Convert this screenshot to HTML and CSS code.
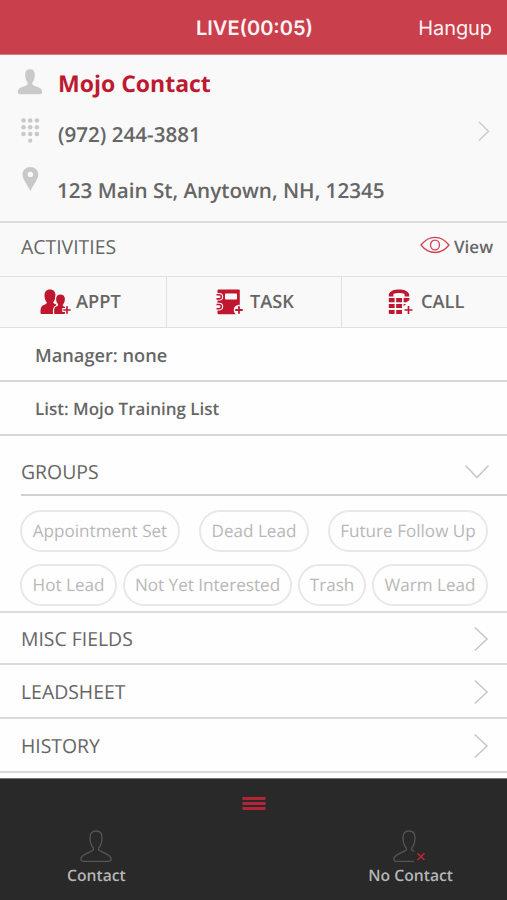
FILE: index.html
```html
<!DOCTYPE html>
<html lang="en">
<head>
<meta charset="utf-8">
<title>Mojo Contact</title>
<link rel="stylesheet" href="styles.css">
</head>
<body>
<header class="topbar"><span></span><h1 class="call-status">LIVE(00:05)</h1><a class="hangup">Hangup</a></header>

<section class="contact">
  <div class="contact-row name-row">
    <svg class="contact-icon" width="26" height="26" viewBox="0 0 26 26"><path fill="#c9c9c9" d="M13 0.3c3.200 0 4.800 1.900 4.800 5.200 0 2.800-.5 5.500-2.100 7.500-.8 1.200-.5 3 1 3.500l5.200 1.900c2.200.9 3.300 2.400 3.300 4.600 0 1.400-.8 2.200-2.200 2.200H3c-1.400 0-2.200-.8-2.200-2.200 0-2.200 1.100-3.700 3.300-4.600l5.200-1.900c1.500-.5 1.800-2.300 1-3.500C8.700 11 8.200 8.300 8.200 5.500 8.200 2.200 9.800.3 13 .3z"/></svg>
    <span class="contact-name">Mojo Contact</span>
  </div>
  <div class="contact-row phone-row">
    <svg class="contact-icon" width="26" height="26" viewBox="0 0 26 26"><g fill="#c9c9c9"><circle cx="6.500" cy="2.500" r="2.300"/><circle cx="13.200" cy="2.500" r="2.300"/><circle cx="19.900" cy="2.500" r="2.300"/><circle cx="6.500" cy="9.300" r="2.300"/><circle cx="13.200" cy="9.300" r="2.300"/><circle cx="19.900" cy="9.300" r="2.300"/><circle cx="6.500" cy="16" r="2.300"/><circle cx="13.200" cy="16" r="2.300"/><circle cx="19.900" cy="16" r="2.300"/><circle cx="13.200" cy="22.700" r="2.100"/></g></svg>
    <span class="phone">(972) 244-3881</span>
    <svg class="row-arrow" width="14" height="22" viewBox="0 0 14 22"><path d="M2 2l9.500 9.200L2 20.500" fill="none" stroke="#ccc" stroke-width="1.500"/></svg>
  </div>
  <div class="contact-row address-row">
    <svg class="contact-icon pin" width="26" height="26" viewBox="0 0 26 26"><path fill="#c9c9c9" fill-rule="evenodd" d="M13.400 1c4.600 0 7.900 3.200 7.900 7.600 0 4.600-4.300 9.200-7.900 16.400C9.800 17.800 5.500 13.200 5.500 8.600 5.500 4.200 8.800 1 13.400 1zm0 4.700a2.700 2.700 0 1 0 0 5.400 2.700 2.700 0 0 0 0-5.400z"/></svg>
    <span class="address">123 Main St, Anytown, NH, 12345</span>
  </div>
</section>

<section class="activities">
  <h2 class="heading activities-title">ACTIVITIES</h2>
  <a class="view"><svg width="30" height="18" viewBox="0 0 30 18"><g fill="none" stroke="#cf4352" stroke-width="1.300"><path d="M1 9C9-1.300 21-1.300 29 9 21 19 9 19 1 9z"/><ellipse cx="15" cy="9" rx="4.500" ry="4.900"/></g></svg><span class="view-label">View</span></a>
</section>

<nav class="actions">
  <a class="action appt">
    <svg width="32" height="27" viewBox="0 0 32 27"><g fill="#c01730"><path d="M10 .5c3.600 0 5.500 2.300 5.500 6 0 3.300-1.200 5.700-2.400 7 .3.900 1.800 1.500 3.300 2L12.800 25H.8c-.8-5 .2-8.300 3-9.100 1.600-.5 3-1.400 3.100-2.500C5.500 12 4.500 9.700 4.500 6.500c0-3.700 1.900-6 5.500-6z"/><path stroke="#f9f9f9" stroke-width="1.200" d="M20.500 5c3.200 0 5 2 5 5.300 0 2.600-.9 4.700-2.100 5.900.4 1 2.600 1 3.600 2.500l-1.800 7H13.700c-.7-4.900.2-8 2.400-8.700 1.300-.4 1.500-.7 1.500-1.200-1.200-1.100-2.100-3-2.100-5.500 0-3.300 1.800-5.300 5-5.300z"/></g><path d="M27 16v10M22.300 21h9.500" stroke="#f9f9f9" stroke-width="4"/><path d="M27 17.300v7.400M23.300 21h7.400" stroke="#c01730" stroke-width="1.700"/></svg>
    <span>APPT</span>
  </a>
  <a class="action task">
    <svg width="27" height="27" viewBox="0 0 27 27"><path fill="#c01730" d="M1.500 1.500Q1.500.5 2.500.5h20.300q1 0 1 1v23.700H2.500q-1 0-1-1z"/><rect x="9" y="4.500" width="12" height="6" rx=".7" fill="#f9f9f9"/><g fill="#f9f9f9"><path d="M0 4h3.500q3.700 0 3.700 3.800t-3.700 3.800H0zM0 13.800h3.500q3.700 0 3.700 3.800t-3.700 3.800H0z"/><circle cx="23" cy="21" r="5.300"/></g><g fill="none" stroke="#c01730" stroke-width="1.600"><path d="M.5 5.700H3q2.300 0 2.300 2.100T3 9.900H.5M.5 15.500H3q2.300 0 2.300 2.100T3 19.700H.5"/></g><path d="M23 17.300v7.500M19.200 21h7.500" stroke="#c01730" stroke-width="1.800"/></svg>
    <span>TASK</span>
  </a>
  <a class="action call">
    <svg width="25" height="27" viewBox="0 0 25 27"><g fill="#c01730"><path d="M.8 7.600V5.200C2.500 1.700 6 .5 11 .5s8.500 1.200 10.200 4.700v2.400h-4.600V5c-3-1.200-8.200-1.200-11.200 0v2.600z"/><path d="M.8 9h5.800v4.200H.8zM8.200 9H14v4.200H8.200zM15.600 9h5.800v2l-3 2.200h-2.800zM.8 15h5.800v4H.8zM8.200 15H14v4H8.200zM15.600 15H18l-2.400 2.300zM.8 20.900h5.800V25H1.800q-1 0-1-1zM8.200 20.900H14V25H8.200z"/></g><path d="M20.500 17v8M16.500 21h8" stroke="#c01730" stroke-width="1.700"/></svg>
    <span>CALL</span>
  </a>
</nav>

<div class="detail manager"><span>Manager: none</span></div>
<div class="detail list"><span>List: Mojo Training List</span></div>

<section class="groups">
  <div class="groups-head">
    <h2 class="heading groups-title">GROUPS</h2>
    <svg width="26" height="16" viewBox="0 0 26 16"><path d="M1.500 1.500L13 13.500 24.500 1.500" fill="none" stroke="#c8c8c8" stroke-width="1.600"/></svg>
  </div>
  <div class="chips">
    <div class="chip-row"><span class="chip appointment">Appointment Set</span><span class="chip dead">Dead Lead</span><span class="chip future">Future Follow Up</span></div>
    <div class="chip-row"><span class="chip hot">Hot Lead</span><span class="chip interested">Not Yet Interested</span><span class="chip trash">Trash</span><span class="chip warm">Warm Lead</span></div>
  </div>
</section>

<div class="menu-row misc"><h2 class="heading">MISC FIELDS</h2><svg width="16" height="26" viewBox="0 0 16 26"><path d="M1.800 1.500L14 13 1.800 24.500" fill="none" stroke="#c8c8c8" stroke-width="1.600"/></svg></div>
<div class="menu-row"><h2 class="heading">LEADSHEET</h2><svg width="16" height="26" viewBox="0 0 16 26"><path d="M1.800 1.500L14 13 1.800 24.500" fill="none" stroke="#c8c8c8" stroke-width="1.600"/></svg></div>
<div class="menu-row"><h2 class="heading">HISTORY</h2><svg width="16" height="26" viewBox="0 0 16 26"><path d="M1.800 1.500L14 13 1.800 24.500" fill="none" stroke="#c8c8c8" stroke-width="1.600"/></svg></div>

<footer class="bottom">
  <div class="burger"><i></i><i></i><i></i></div>
  <div class="results">
    <a class="result reached">
      <svg width="32" height="32" viewBox="0 0 32 32"><path d="M16 1c4 0 6 2.500 6 6.500 0 5-1.500 8.500-3.300 10.500-.6 1.300.1 2.300 1.400 2.900l7 3.500c2.600 1.300 4 2.900 4 4.600 0 1.600-.9 2.300-2.500 2.300H3.400C1.800 31.300.9 30.600.9 29c0-1.700 1.400-3.300 4-4.600l7-3.500c1.300-.6 2-1.600 1.400-2.900C11.500 16 10 12.500 10 7.500 10 3.500 12 1 16 1z" fill="none" stroke="#555" stroke-width="1.300"/></svg>
      <span>Contact</span>
    </a>
    <a class="result missed">
      <svg width="36" height="32" viewBox="0 0 36 32"><path d="M21 31.300H3.400C1.800 31.300.9 30.600.9 29c0-1.700 1.400-3.300 4-4.600l7-3.500c1.300-.6 2-1.600 1.400-2.900C11.500 16 10 12.500 10 7.500 10 3.500 12 1 16 1s6 2.500 6 6.500c0 5-1.500 8.500-3.300 10.500-.6 1.300.1 2.300 2.600 3.300" fill="none" stroke="#555" stroke-width="1.300"/><path d="M24.500 23.300l7 6.700M31.500 23.300l-7 6.700" stroke="#c02638" stroke-width="1.500"/></svg>
      <span>No Contact</span>
    </a>
  </div>
</footer>
</body>
</html>
```
FILE: styles.css
```css
* { box-sizing: border-box; }
body {
  margin: 0;
  width: 507px;
  height: 900px;
  overflow: hidden;
  background: #fefefe;
  color: #666;
  font-family: "Open Sans", sans-serif;
  font-weight: 600;
  text-rendering: geometricPrecision;
}
svg { display: block; flex: none; overflow: visible; }
span, a { white-space: nowrap; }
h1, h2 { margin: 0; }

.topbar {
  display: grid;
  grid-template-columns: 1fr auto 1fr;
  align-items: center;
  height: 55px;
  padding: 2px 15px 0 17px;
  background: #c93f4c;
  border-bottom: 1px solid #d77a83;
  color: #fdf3f4;
  font-family: Inter, sans-serif;
}
.call-status { font-size: 20px; line-height: 24px; font-weight: 600; }
.hangup { justify-self: end; font-size: 20px; font-weight: 400; letter-spacing: -0.1px; }

.contact { height: 168px; background: #f9f9f9; border-bottom: 2px solid #dcdcdc; }
.contact-row { display: flex; align-items: center; padding: 0 16px 0 17px; }
.contact-icon { margin-right: 15px; }
.name-row { height: 56px; }
.name-row .contact-icon { margin-top: -3px; }
.contact-name { color: #bd1a32; font-size: 23px; font-weight: 700; }
.phone-row { height: 47px; }
.phone-row .contact-icon { margin-top: -7px; }
.phone { font-size: 20.600px; }
.row-arrow { margin-left: auto; margin-top: -8px; }
.address-row { height: 65px; }
.pin { margin-top: -23px; }
.address { margin-left: -1px; padding-top: 1px; font-size: 20.650px; }

.heading { font-size: 19.400px; font-weight: 400; line-height: 26px; color: #666; }
.activities {
  display: flex;
  align-items: center;
  justify-content: space-between;
  height: 54px;
  padding: 0 14px 6px 21px;
  background: #f9f9f9;
  border-bottom: 1px solid #e1e1e1;
}
.view { display: flex; align-items: center; gap: 4px; font-size: 17px; }
.view svg { margin-top: -3px; }

.actions {
  display: grid;
  grid-template-columns: 167px 175px 165px;
  height: 51px;
  background: #f9f9f9;
  border-bottom: 1px solid #dedede;
}
.action { display: flex; align-items: center; font-size: 18.200px; border-right: 1px solid #e0e0e0; }
.action:last-child { border-right: 0; }
.appt { padding-left: 40px; gap: 4px; }
.task { padding-left: 49px; gap: 7px; }
.call { padding-left: 46px; gap: 8px; }

.detail { display: flex; align-items: center; height: 54px; padding-left: 35px; border-bottom: 2px solid #d8d8d8; font-size: 17px; }
.manager { padding-top: 4px; font-size: 18.200px; }

.groups-head {
  display: flex;
  align-items: center;
  justify-content: space-between;
  height: 60px;
  margin-left: 21px;
  padding: 14px 17px 0 0;
  border-bottom: 2px solid #d0d0d0;
}
.chips { display: grid; gap: 12px; height: 117px; padding: 14px 19px 7px 20px; border-bottom: 2px solid #dcdcdc; }
.chip-row { display: flex; justify-content: space-between; }
.chip {
  display: flex;
  align-items: center;
  justify-content: center;
  height: 42px;
  padding-top: 1px;
  border: 2px solid #e8e8e8;
  border-radius: 21px;
  color: #b8b8b8;
  font-size: 17.100px;
  font-weight: 400;
}
.appointment { width: 160px; }
.dead { width: 110px; }
.future { width: 160px; }
.hot { width: 97px; }
.interested { width: 169px; }
.trash { width: 68px; }
.warm { width: 116px; }

.menu-row {
  display: flex;
  align-items: center;
  justify-content: space-between;
  height: 54px;
  padding: 1px 18px 0 21px;
  border-bottom: 2px solid #dadada;
}
.misc { height: 52px; }

.bottom { height: 122px; margin-top: 5px; padding-top: 18px; background: #292929; border-top: 1px solid #777; }
.burger { display: grid; gap: 2px; width: 23px; margin: 0 auto; transform: translateX(.5px); }
.burger i { height: 3px; background: #b12636; }
.results { display: flex; justify-content: space-between; padding: 20px 54px 0 67px; }
.result { display: flex; flex-direction: column; align-items: center; color: #b5b5b5; font-size: 15.700px; line-height: 22px; }
.result span { margin-top: 2px; }
```
